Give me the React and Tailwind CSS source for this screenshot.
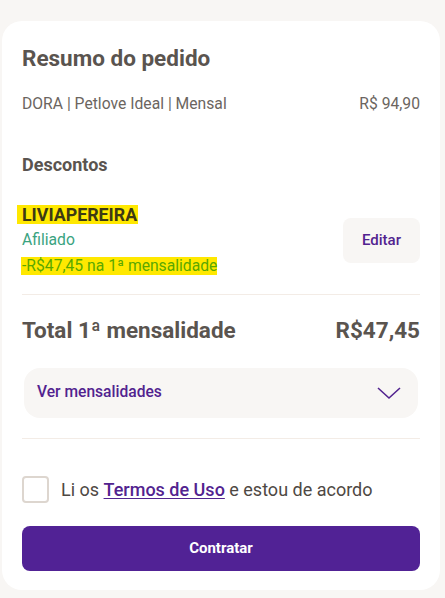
import { useState } from "react";

export default function App() {
  const [agree, setAgree] = useState(false);
  const [open, setOpen] = useState(false);

  return (
    <div
      className="min-h-screen bg-[#f8f6f4] pt-[21px] pb-2"
      style={{ fontFamily: "Roboto, 'Noto Sans', sans-serif" }}
    >
      <div className="ml-[2px] w-[438px] rounded-[20px] bg-white px-5 pt-[23px] pb-[19px]">
        <h2 className="text-[22.5px] font-bold leading-[28px] text-[#5a544f]">
          Resumo do pedido
        </h2>

        <div className="mt-[20px] flex items-center justify-between text-[15.7px] leading-6 text-[#6b6560]">
          <span>DORA | Petlove Ideal | Mensal</span>
          <span>R$ 94,90</span>
        </div>

        <h3 className="mt-[37px] text-[18px] font-bold leading-6 text-[#5a544f]">
          Descontos
        </h3>

        <div className="mt-[28px] flex items-center justify-between">
          <div className="flex flex-col items-start">
            <span className="-ml-[5px] bg-[#ffe800] pl-[5px] pr-[1px] text-[17.8px] font-bold leading-[19px] text-[#3d3a14]">
              LIVIAPEREIRA
            </span>
            <span className="mt-[6px] text-[15.7px] leading-5 text-[#3aa37f]">
              Afiliado
            </span>
            <span className="-ml-[1px] mt-[7px] bg-[#ffe800] pl-[1px] text-[15.7px] leading-[18px] text-[#5aa800]">
              -R$47,45 na 1ª mensalidade
            </span>
          </div>
          <button className="h-[45px] w-[77px] rounded-lg bg-[#f8f6f4] text-[15px] font-medium text-[#52238f]">
            Editar
          </button>
        </div>

        <div className="mt-[19px] h-px bg-[#f3ece6]" />

        <div className="mt-[20px] flex items-center justify-between text-[22.5px] font-bold leading-[30px] text-[#5a544f]">
          <span>Total 1ª mensalidade</span>
          <span>R$47,45</span>
        </div>

        <button
          onClick={() => setOpen(!open)}
          className="mx-[2px] mt-[23px] flex h-[50px] w-[394px] items-center justify-between rounded-2xl bg-[#f8f6f4] pl-[13px] pr-[16px]"
        >
          <span className="text-[15.6px] font-medium text-[#52238f]">
            Ver mensalidades
          </span>
          <svg
            width="26"
            height="16"
            viewBox="0 0 26 16"
            fill="none"
            stroke="#52238f"
            strokeWidth="1.6"
            className={open ? "rotate-180" : ""}
          >
            <path d="M2 3 L13 13 L24 3" />
          </svg>
        </button>

        <div className="mt-[20px] h-px bg-[#f3ece6]" />

        <label className="mt-[37px] flex items-center gap-3 cursor-pointer">
          <input
            type="checkbox"
            checked={agree}
            onChange={(e) => setAgree(e.target.checked)}
            className="sr-only"
          />
          <span
            className={
              "h-[27px] w-[27px] rounded-[4px] border-2 border-[#ddd6cf] " +
              (agree ? "bg-[#52238f]" : "bg-white")
            }
          />
          <span className="text-[18px] leading-6 text-[#4e4843]">
            Li os{" "}
            <span className="font-medium text-[#52238f] underline underline-offset-2">
              Termos de Uso
            </span>{" "}
            e estou de acordo
          </span>
        </label>

        <button className="mt-[23px] h-[45px] w-full rounded-lg bg-[#512295] text-[15px] font-bold text-white">
          Contratar
        </button>
      </div>
    </div>
  );
}
